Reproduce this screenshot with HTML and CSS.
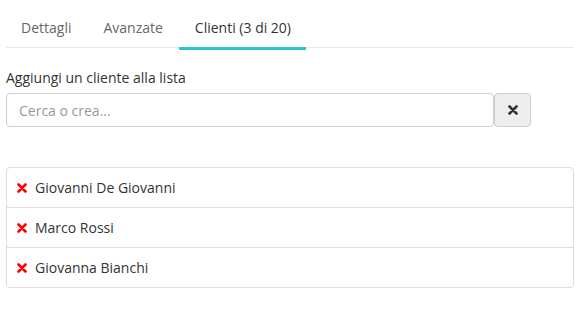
FILE: index.html
```html
<!DOCTYPE html>
<html lang="it">
<head>
  <meta charset="UTF-8">
  <title>Clienti</title>
  <link rel="stylesheet" href="styles.css">
</head>
<body>

  <ul class="tabs">
    <li class="tab">Dettagli</li>
    <li class="tab">Avanzate</li>
    <li class="tab active">Clienti (3 di 20)</li>
  </ul>

  <div class="add-client">
    <label for="search">Aggiungi un cliente alla lista</label>
    <div class="input-group">
      <input id="search" type="text" placeholder="Cerca o crea...">
      <button class="clear-btn" title="Svuota">
        <svg width="10" height="10" viewBox="0 0 10 10"><path d="M1.5 1.5 L8.5 8.5 M8.5 1.5 L1.5 8.5" stroke="#333" stroke-width="2.6" stroke-linecap="round"/></svg>
      </button>
    </div>
  </div>

  <ul class="client-list">
    <li><span class="remove"><svg width="10" height="10" viewBox="0 0 10 10"><path d="M1.5 1.5 L8.5 8.5 M8.5 1.5 L1.5 8.5" stroke="#f00" stroke-width="2.6" stroke-linecap="round"/></svg></span>Giovanni De Giovanni</li>
    <li><span class="remove"><svg width="10" height="10" viewBox="0 0 10 10"><path d="M1.5 1.5 L8.5 8.5 M8.5 1.5 L1.5 8.5" stroke="#f00" stroke-width="2.6" stroke-linecap="round"/></svg></span>Marco Rossi</li>
    <li><span class="remove"><svg width="10" height="10" viewBox="0 0 10 10"><path d="M1.5 1.5 L8.5 8.5 M8.5 1.5 L1.5 8.5" stroke="#f00" stroke-width="2.6" stroke-linecap="round"/></svg></span>Giovanna Bianchi</li>
  </ul>

</body>
</html>
```

FILE: styles.css
```css
body {
  font-family: 'Open Sans', sans-serif;
  font-size: 14px;
  line-height: 20px;
  color: #333;
  background: white;
  margin: 8px 7px 0 6px;
}

.tabs {
  display: flex;
  list-style: none;
  margin: 0;
  padding: 0;
  border-bottom: 1px solid #eaeaea;
}

.tab {
  padding: 10px 16px 9px;
  color: #666;
  border-bottom: 3px solid transparent;
  margin-bottom: -3px;
  cursor: pointer;
}

.tab:first-child {
  padding-left: 15px;
}

.tab.active {
  color: #333;
  padding-right: 15px;
  border-bottom-color: #2ec4cf;
}

.add-client {
  margin-top: 20px;
}

.add-client label {
  display: block;
  margin-bottom: 5px;
}

.input-group {
  display: flex;
}

.input-group input {
  width: 488px;
  height: 34px;
  box-sizing: border-box;
  padding: 6px 12px;
  font-family: inherit;
  font-size: 14px;
  color: #333;
  border: 1px solid #c8d0dc;
  border-radius: 4px;
  outline: none;
}

.input-group input::placeholder {
  color: #999;
}

.clear-btn {
  width: 37px;
  height: 34px;
  box-sizing: border-box;
  background: #eee;
  border: 1px solid #ccc;
  border-radius: 4px;
  display: flex;
  align-items: center;
  justify-content: center;
  padding: 0;
  cursor: pointer;
}

.client-list {
  list-style: none;
  margin: 40px 0 0;
  padding: 0;
  border: 1px solid #ddd;
  border-radius: 4px;
}

.client-list li {
  display: flex;
  align-items: center;
  height: 40px;
  box-sizing: border-box;
  padding: 0 10px;
  border-top: 1px solid #ddd;
}

.client-list li:first-child {
  border-top: none;
  height: 39px;
}

.remove {
  display: flex;
  margin-right: 8px;
  cursor: pointer;
}
```
